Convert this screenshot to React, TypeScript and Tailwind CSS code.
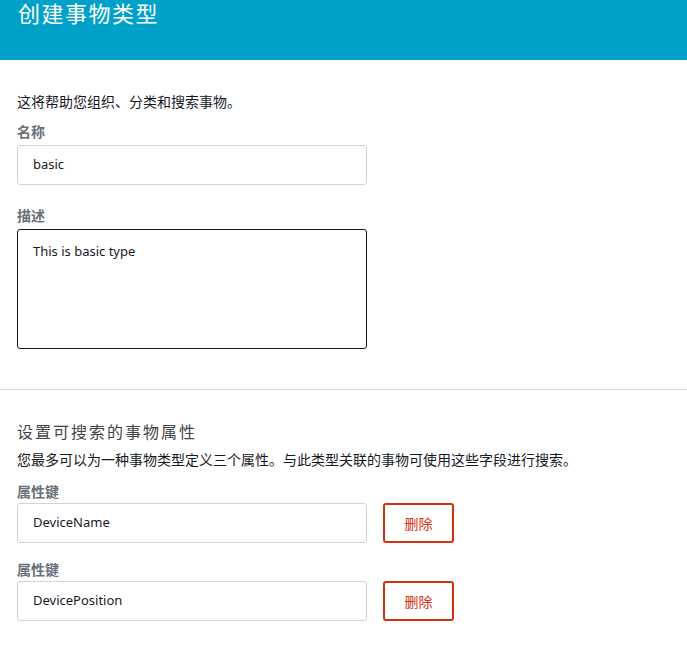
const font = { fontFamily: '"Noto Sans", "Noto Sans CJK SC", sans-serif' }

function AttrRow({ value, className }: { value: string; className?: string }) {
  return (
    <div className={className}>
      <div className="text-[14px] leading-[18px] font-bold text-[#687078] mb-[2px]">属性键</div>
      <div className="flex items-center gap-4">
        <div className="w-[350px] h-[40px] border border-[#cfd4d4] rounded-[3px] flex items-center px-[15px] text-[13px] text-[#16191f]">
          {value}
        </div>
        <button className="w-[71px] h-[40px] border-2 border-[#d13212] rounded-[3px] text-[14px] text-[#d13212] bg-white">
          删除
        </button>
      </div>
    </div>
  )
}

export default function App() {
  return (
    <div className="w-[687px] h-[646px] bg-white overflow-hidden" style={font}>
      {/* Header */}
      <div className="h-[60px] bg-[#00a1c9] px-[18px]">
        <h1 className="text-[22px] leading-[26px] tracking-[1.5px] text-white font-normal">创建事物类型</h1>
      </div>

      {/* Details */}
      <div className="px-[17px] pt-[33px] pb-[40px]">
        <p className="text-[14px] leading-[18px] text-[#16191f]">这将帮助您组织、分类和搜索事物。</p>
        <div className="mt-[12px] text-[14px] leading-[18px] font-bold text-[#687078] mb-[4px]">名称</div>
        <div className="w-[350px] h-[40px] border border-[#cfd4d4] rounded-[3px] flex items-center px-[15px] text-[13px] text-[#16191f]">
          basic
        </div>
        <div className="mt-[22px] text-[14px] leading-[18px] font-bold text-[#687078] mb-[4px]">描述</div>
        <div className="w-[350px] h-[120px] border border-[#16191f] rounded-[3px] px-[15px] pt-[12px] text-[13px] leading-[18px] text-[#16191f]">
          This is basic type
        </div>
      </div>

      <div className="h-px bg-[#d5dbdb]" />

      {/* Searchable attributes */}
      <div className="px-[17px] pt-[31px]">
        <h2 className="text-[16px] leading-[22px] tracking-[2px] text-[#444] font-normal">设置可搜索的事物属性</h2>
        <p className="mt-[8px] text-[14px] leading-[18px] text-[#16191f]">
          您最多可以为一种事物类型定义三个属性。与此类型关联的事物可使用这些字段进行搜索。
        </p>
        <AttrRow value="DeviceName" className="mt-[14px]" />
        <AttrRow value="DevicePosition" className="mt-[18px]" />
      </div>
    </div>
  )
}
